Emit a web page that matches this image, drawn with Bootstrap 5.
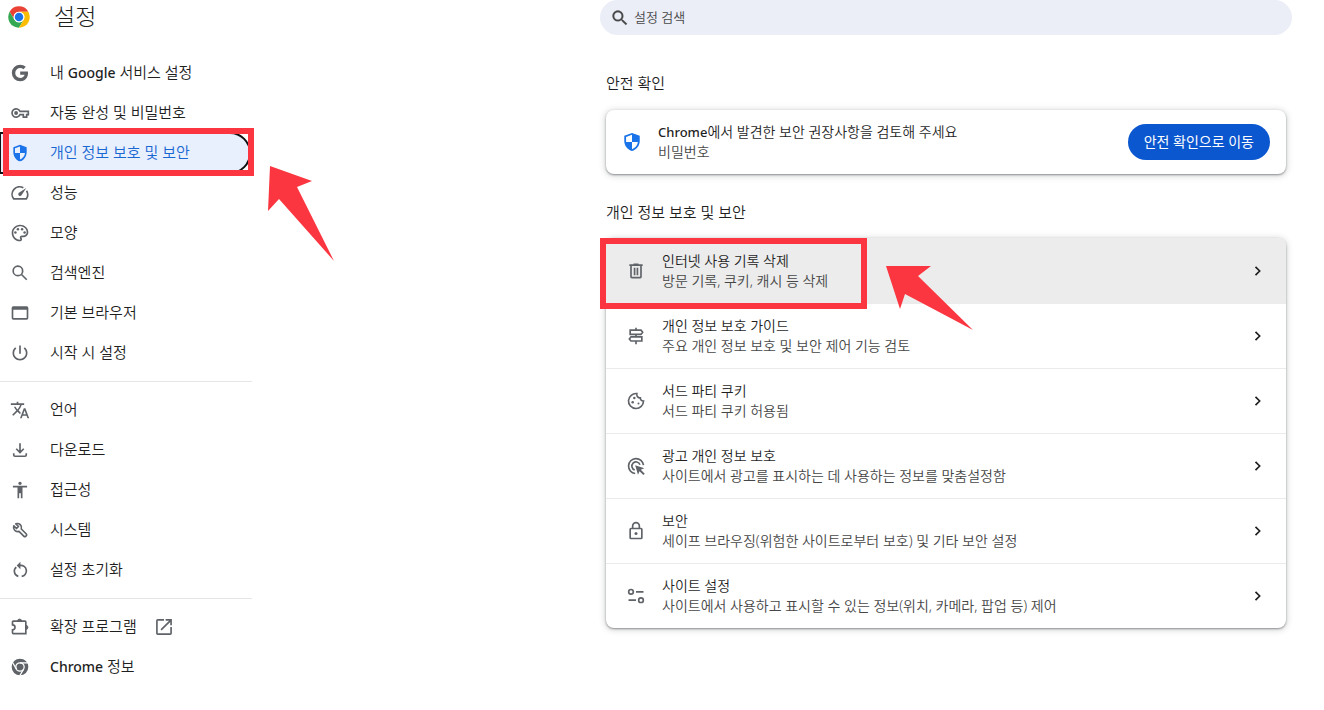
<!DOCTYPE html>
<html lang="ko">
<head>
<meta charset="utf-8">
<meta name="viewport" content="width=device-width, initial-scale=1">
<title>설정</title>
<link href="https://cdn.jsdelivr.net/npm/bootstrap@5.3.0/dist/css/bootstrap.min.css" rel="stylesheet">
<style>
body{font-family:"Noto Sans","Noto Sans CJK KR",sans-serif;font-size:14px;font-weight:350;line-height:20px;color:#1f1f1f;background:#fff}
svg{display:block;flex:none;fill:currentColor}
.line{fill:none;stroke:currentColor;stroke-width:2}
.side{width:252px;flex:none}
.brand{height:34px;padding-left:8px;gap:24px;margin-bottom:19px}
.brand h1{font-size:23px;line-height:32px;font-weight:300;padding-bottom:2px}
.side .nav-link{height:40px;padding:0 10px;gap:20px;font-size:15px;font-weight:350;color:#1f1f1f;position:relative}
.side .nav-link>span{padding-bottom:2px}
.side .nav-link svg{color:#5f6368}
.side .nav-link.active{color:#1967d2;background:#e8f0fe;width:250px;border-radius:0 20px 20px 0;outline:2px solid #101010;outline-offset:-1px}
.side .nav-link.active>svg:first-child{color:#1a73e8}
.side .launch{margin-left:-3px}
.side hr{margin:8px 0;border-color:#e4e6e8;opacity:1}
.latin{font-size:14px;font-weight:500}
.latin-sm{font-size:13px;font-weight:500}
.main-col{padding-right:32px;min-width:0}
.main-inner{max-width:692px}
.searchbar{height:35px;padding:0 10px;gap:4px;background:#ebeef7;border-radius:18px;color:#474747}
.searchbar input{background:none;border:0;outline:0;padding:0 0 2px;font-size:13px;font-weight:350;color:#474747}
.searchbar input::placeholder{color:#474747;opacity:1}
.sections{padding:0 6px}
.sections h2{font-size:15px;line-height:24px;font-weight:350;margin:26px 0 14px}
.sections h2:first-child{margin:36px 0 15px}
.panel{background:#fff;border-radius:8px;box-shadow:0 1px 2px rgba(60,64,67,.5),0 1px 6px 1px rgba(60,64,67,.22)}
.check-row{min-height:64px;padding:0 16px;gap:16px}
.check-text{line-height:19px;padding-bottom:1px}
.go{height:36px;padding:0 16px;border-radius:18px;background:#0b57d0;color:#fff;font-size:14px;line-height:20px}
.sub{color:#474747}
.panel .list-group-item{min-height:65px;padding:0 18px 0 20px;gap:16px;border-width:1px 0 0;border-color:#ebebeb;color:#1f1f1f;background:none;position:relative}
.panel .list-group-item:first-child{background:#ececec;border-width:0;padding-top:1px;border-radius:8px 8px 0 0;z-index:2}
.panel .list-group-item>svg:first-child{color:#5f6368}
.frame{position:absolute;border:6px solid #fb3640;pointer-events:none}
.frame-nav{left:3px;top:-5px;width:251px;height:48px}
.frame-row{left:-6px;top:0;width:267px;height:71px}
.arrow{position:absolute;pointer-events:none}
.side .nav-link .arrow,.panel .arrow{color:#fb3640}
.arrow-nav{left:267px;top:32px}
.arrow-row{left:280px;top:28px}
</style>
</head>
<body>
<div class="d-flex align-items-start">
<aside class="side">
  <header class="brand d-flex align-items-center">
    <svg width="22" height="22" viewBox="0 0 48 48" aria-hidden="true"><circle cx="24" cy="24" r="23.5" fill="#fff"/><path fill="#ea4335" d="M3.6 12.3A23.5 23.5 0 0 1 44.4 12.3H24A11.7 11.7 0 0 0 13.9 29.9Z"/><path fill="#34a853" d="M3.6 12.3A23.5 23.5 0 0 0 24 47.5L34.2 29.9A11.7 11.7 0 0 1 13.9 29.9Z"/><path fill="#fbbc04" d="M44.4 12.3A23.5 23.5 0 0 1 24 47.5L34.2 29.9A11.7 11.7 0 0 0 24 12.3Z"/><circle cx="24" cy="24" r="11.7" fill="#fff"/><circle cx="24" cy="24" r="9.3" fill="#1a73e8"/></svg>
    <h1 class="mb-0">설정</h1>
  </header>
  <nav class="nav flex-column flex-nowrap" aria-label="설정">
    <a class="nav-link d-flex align-items-center" href="#google"><svg width="20" height="20" viewBox="0 0 24 24"><path d="M12.2 10.2v3.9h5.4c-.7 2.3-2.6 3.8-5.4 3.8a5.9 5.9 0 1 1 0-11.8c1.5 0 2.8.5 3.9 1.4L19 4.600A10 10 0 0 0 12.200 2a10 10 0 1 0 0 20c8.300 0 10.100-7.800 9.300-11.800z"/></svg><span>내 <span class="latin">Google</span> 서비스 설정</span></a>
    <a class="nav-link d-flex align-items-center" href="#autofill"><svg width="20" height="20" viewBox="0 0 24 24"><path class="line" d="M12 10h10v4h-2v3h-4v-3h-4a5 5 0 1 1 0-4z"/><circle cx="7.300" cy="12" r="2.300"/></svg><span>자동 완성 및 비밀번호</span></a>
    <a class="nav-link active d-flex align-items-center" href="#privacy" aria-current="page"><svg width="20" height="20" viewBox="0 0 24 24"><path fill-rule="evenodd" d="M12 2 4 5v6c0 5.100 3.400 9.700 8 11 4.600-1.300 8-5.900 8-11V5zM12 4.100V12h6c-.4 3.600-2.800 6.800-6 7.900V12H6V6.400z"/></svg><span>개인 정보 보호 및 보안</span><i class="frame frame-nav"></i><svg class="arrow arrow-nav" width="68" height="98" viewBox="0 0 68 98"><path d="M3 1 45 16 30 22 67 96 12 34 1 46z"/></svg></a>
    <a class="nav-link d-flex align-items-center" href="#performance"><svg width="20" height="20" viewBox="0 0 24 24"><path class="line" d="M16 5.800A9 9 0 0 0 4.300 19h15.400a9 9 0 0 0 .2-9.700"/><path d="m19.500 6-8.800 5.700a2.200 2.200 0 1 0 3.100 3.100z"/></svg><span>성능</span></a>
    <a class="nav-link d-flex align-items-center" href="#appearance"><svg width="20" height="20" viewBox="0 0 24 24"><path d="M12 22C6.490 22 2 17.510 2 12S6.490 2 12 2s10 4.040 10 9c0 3.310-2.690 6-6 6h-1.770c-.28 0-.5.22-.5.5 0 .12.05.23.13.33.41.47.64 1.060.64 1.670 0 1.380-1.120 2.500-2.500 2.500zm0-18c-4.410 0-8 3.590-8 8s3.590 8 8 8c.28 0 .5-.22.5-.5 0-.16-.08-.28-.14-.35-.41-.46-.63-1.050-.63-1.650 0-1.380 1.120-2.500 2.500-2.500H16c2.210 0 4-1.790 4-4 0-3.860-3.590-7-8-7z"/><circle cx="6.500" cy="11.500" r="1.500"/><circle cx="9.500" cy="7.500" r="1.500"/><circle cx="14.500" cy="7.500" r="1.500"/><circle cx="17.500" cy="11.500" r="1.500"/></svg><span>모양</span></a>
    <a class="nav-link d-flex align-items-center" href="#search"><svg width="20" height="20" viewBox="0 0 24 24"><circle class="line" cx="9.500" cy="9.500" r="5.700"/><path class="line" d="m13.800 13.800 6.300 6.300"/></svg><span>검색엔진</span></a>
    <a class="nav-link d-flex align-items-center" href="#default"><svg width="20" height="20" viewBox="0 0 24 24"><path fill-rule="evenodd" d="M4 4h16a2 2 0 0 1 2 2v12a2 2 0 0 1-2 2H4a2 2 0 0 1-2-2V6a2 2 0 0 1 2-2zm0 4v10h16V8z"/></svg><span>기본 브라우저</span></a>
    <a class="nav-link d-flex align-items-center" href="#startup"><svg width="20" height="20" viewBox="0 0 24 24"><path d="M13 3h-2v10h2V3zm4.830 2.170-1.420 1.420C17.990 7.860 19 9.810 19 12c0 3.870-3.130 7-7 7s-7-3.130-7-7c0-2.190 1.010-4.140 2.580-5.420L6.170 5.170C4.230 6.820 3 9.260 3 12c0 4.970 4.030 9 9 9s9-4.030 9-9c0-2.740-1.230-5.180-3.170-6.830z"/></svg><span>시작 시 설정</span></a>
    <hr>
    <a class="nav-link d-flex align-items-center" href="#languages"><svg width="20" height="20" viewBox="0 0 24 24"><path d="m12.870 15.070-2.540-2.510.03-.03c1.740-1.940 2.980-4.170 3.710-6.530H17V4h-7V2H8v2H1v1.990h11.170C11.500 7.920 10.440 9.750 9 11.350 8.070 10.320 7.300 9.190 6.690 8h-2c.73 1.630 1.730 3.170 2.980 4.560l-5.090 5.020L4 19l5-5 3.110 3.110.76-2.040zM18.500 10h-2L12 22h2l1.120-3h4.750L21 22h2l-4.500-12zm-2.620 7 1.620-4.330L19.120 17h-3.240z"/></svg><span>언어</span></a>
    <a class="nav-link d-flex align-items-center" href="#downloads"><svg width="20" height="20" viewBox="0 0 24 24"><path class="line" d="M12 4v11m-4.500-4.500L12 15l4.500-4.500M4.500 16v2a1.500 1.500 0 0 0 1.500 1.500h12a1.500 1.500 0 0 0 1.500-1.500v-2"/></svg><span>다운로드</span></a>
    <a class="nav-link d-flex align-items-center" href="#accessibility"><svg width="20" height="20" viewBox="0 0 24 24"><path d="M12 2c1.100 0 2 .9 2 2s-.9 2-2 2-2-.9-2-2 .9-2 2-2zm8.500 7H15v13h-2v-6h-2v6H9V9H3.500V7h17z"/></svg><span>접근성</span></a>
    <a class="nav-link d-flex align-items-center" href="#system"><svg width="20" height="20" viewBox="0 0 24 24"><path class="line" stroke-linejoin="round" d="M7 4.600a5 5 0 0 1 6.600 6.200l6 6a1.500 1.500 0 0 1 0 2l-.8.8a1.500 1.500 0 0 1-2 0l-6-6A5 5 0 0 1 4.600 7l3.200 3.200 2.400-2.400z"/></svg><span>시스템</span></a>
    <a class="nav-link d-flex align-items-center" href="#reset"><svg width="20" height="20" viewBox="0 0 24 24"><path class="line" d="M10 19.700A6.500 6.500 0 0 1 7.500 8.500M11 6.500h1a6.600 6.600 0 0 1 2 13.200"/><path d="M12.500 2v9L8 6.500z"/></svg><span>설정 초기화</span></a>
    <hr>
    <a class="nav-link d-flex align-items-center" href="#extensions"><svg width="20" height="20" viewBox="0 0 24 24"><path class="line" d="M4 5h14a1 1 0 0 1 1 1v14H4a1 1 0 0 1-1-1v-3.500a3 3 0 0 0 0-6V6a1 1 0 0 1 1-1z"/><path d="M9 5a2.500 2.500 0 0 1 5 0zM19 10a2.500 2.500 0 0 1 0 5z" stroke="currentColor"/></svg><span>확장 프로그램</span><svg class="launch" width="20" height="20" viewBox="0 0 24 24"><path d="M19.500 19.500h-15v-15H12v-2H4.500a2 2 0 0 0-2 2v15c0 1.100.9 2 2 2h15a2 2 0 0 0 2-2V12h-2zM14 2.500v2h4.100L7.800 14.800l1.400 1.400L19.500 5.900V10h2V2.500z"/></svg></a>
    <a class="nav-link d-flex align-items-center" href="#about"><svg width="20" height="20" viewBox="0 0 24 24"><circle cx="12" cy="12" r="10"/><circle cx="12" cy="12" r="5" fill="none" stroke="#fff" stroke-width="1.500"/><path d="M12 7h9.500M7.700 14.500 2.900 6.300M16.300 14.500 11.500 22.800" fill="none" stroke="#fff" stroke-width="1.500"/></svg><span><span class="latin">Chrome</span> 정보</span></a>
  </nav>
</aside>
<main class="main-col flex-grow-1">
<div class="main-inner ms-auto">
  <label class="searchbar d-flex align-items-center"><svg width="20" height="20" viewBox="0 0 24 24"><path d="M15.500 14h-.79l-.28-.27C15.410 12.590 16 11.110 16 9.500 16 5.910 13.090 3 9.500 3S3 5.910 3 9.500 5.910 16 9.500 16c1.610 0 3.090-.59 4.230-1.570l.27.28v.79l5 4.990L20.490 19l-4.990-5zm-6 0C7.010 14 5 11.990 5 9.500S7.010 5 9.500 5 14 7.010 14 9.500 11.990 14 9.500 14z" stroke="currentColor" stroke-width=".3"/></svg><input class="flex-grow-1" type="search" placeholder="설정 검색" aria-label="설정 검색"></label>
  <div class="sections">
    <h2>안전 확인</h2>
    <section class="panel check-row d-flex align-items-center">
      <svg width="20" height="20" viewBox="1 1 22 22" color="#1a73e8"><path fill-rule="evenodd" d="M12 2 3.500 5v6c0 5.100 3.600 9.700 8.500 11 4.900-1.300 8.500-5.900 8.500-11V5zM12 4.100V12h6.500c-.4 3.600-3 6.800-6.500 7.900V12H5.500V6.400z"/></svg>
      <div class="check-text flex-grow-1"><div><span class="latin-sm">Chrome</span>에서 발견한 보안 권장사항을 검토해 주세요</div><div class="sub">비밀번호</div></div>
      <button type="button" class="btn go border-0 text-nowrap">안전 확인으로 이동</button>
    </section>
    <h2>개인 정보 보호 및 보안</h2>
    <div class="panel list-group list-group-flush">
      <a class="list-group-item d-flex align-items-center" href="#clear"><svg width="20" height="20" viewBox="0 0 24 24"><path class="line" d="M4 5h16M9 4h6M6 5v14a1 1 0 0 0 1 1h10a1 1 0 0 0 1-1V5M10.300 8v9M13.700 8v9"/></svg><div class="flex-grow-1"><div>인터넷 사용 기록 삭제</div><div class="sub">방문 기록, 쿠키, 캐시 등 삭제</div></div><svg width="20" height="20" viewBox="0 0 24 24"><path class="line" d="m9 7 5 5-5 5"/></svg><i class="frame frame-row"></i><svg class="arrow arrow-row" width="88" height="66" viewBox="0 0 88 66"><path d="M0 0h45L32 10 87 64 19 28 14 43z"/></svg></a>
      <a class="list-group-item d-flex align-items-center" href="#guide"><svg width="20" height="20" viewBox="0 0 24 24"><path class="line" d="M12 2v3M12 10v3M12 18v4M5 5h13l2 2.500-2 2.500H5zM19 13H6l-2 2.500L6 18h13z"/></svg><div class="flex-grow-1"><div>개인 정보 보호 가이드</div><div class="sub">주요 개인 정보 보호 및 보안 제어 기능 검토</div></div><svg width="20" height="20" viewBox="0 0 24 24"><path class="line" d="m9 7 5 5-5 5"/></svg></a>
      <a class="list-group-item d-flex align-items-center" href="#cookies"><svg width="20" height="20" viewBox="0 0 24 24"><path class="line" d="M13 3.100A9 9 0 1 0 21 12a3.500 3.500 0 0 1-3.800-3.800A4 4 0 0 1 13 3.100z"/><circle cx="10" cy="8.500" r="1.500"/><circle cx="8" cy="13.500" r="1.500"/><circle cx="15" cy="15" r="1.200"/></svg><div class="flex-grow-1"><div>서드 파티 쿠키</div><div class="sub">서드 파티 쿠키 허용됨</div></div><svg width="20" height="20" viewBox="0 0 24 24"><path class="line" d="m9 7 5 5-5 5"/></svg></a>
      <a class="list-group-item d-flex align-items-center" href="#ads"><svg width="20" height="20" viewBox="0 0 24 24"><path class="line" d="M11 21a9 9 0 1 1 10-10M10.500 16.800a5 5 0 1 1 6.300-6.300"/><path d="m11 11 11 3.700-4.200 1.900 4.700 4.700-1.600 1.600-4.700-4.700-1.800 4.300z"/></svg><div class="flex-grow-1"><div>광고 개인 정보 보호</div><div class="sub">사이트에서 광고를 표시하는 데 사용하는 정보를 맞춤설정함</div></div><svg width="20" height="20" viewBox="0 0 24 24"><path class="line" d="m9 7 5 5-5 5"/></svg></a>
      <a class="list-group-item d-flex align-items-center" href="#security"><svg width="20" height="20" viewBox="0 0 24 24"><path class="line" d="M6 9h12a1 1 0 0 1 1 1v10a1 1 0 0 1-1 1H6a1 1 0 0 1-1-1V10a1 1 0 0 1 1-1zM8 9V6a4 4 0 0 1 8 0v3"/><circle cx="12" cy="15" r="1.800"/></svg><div class="flex-grow-1"><div>보안</div><div class="sub">세이프 브라우징(위험한 사이트로부터 보호) 및 기타 보안 설정</div></div><svg width="20" height="20" viewBox="0 0 24 24"><path class="line" d="m9 7 5 5-5 5"/></svg></a>
      <a class="list-group-item d-flex align-items-center" href="#site"><svg width="20" height="20" viewBox="0 0 24 24"><path class="line" d="M12 7h9M3 17h9"/><circle class="line" cx="6" cy="7" r="2.800"/><circle class="line" cx="18" cy="17" r="2.800"/></svg><div class="flex-grow-1"><div>사이트 설정</div><div class="sub">사이트에서 사용하고 표시할 수 있는 정보(위치, 카메라, 팝업 등) 제어</div></div><svg width="20" height="20" viewBox="0 0 24 24"><path class="line" d="m9 7 5 5-5 5"/></svg></a>
    </div>
  </div>
</div>
</main>
</div>
<script src="https://cdn.jsdelivr.net/npm/bootstrap@5.3.0/dist/js/bootstrap.bundle.min.js"></script>
</body>
</html>
